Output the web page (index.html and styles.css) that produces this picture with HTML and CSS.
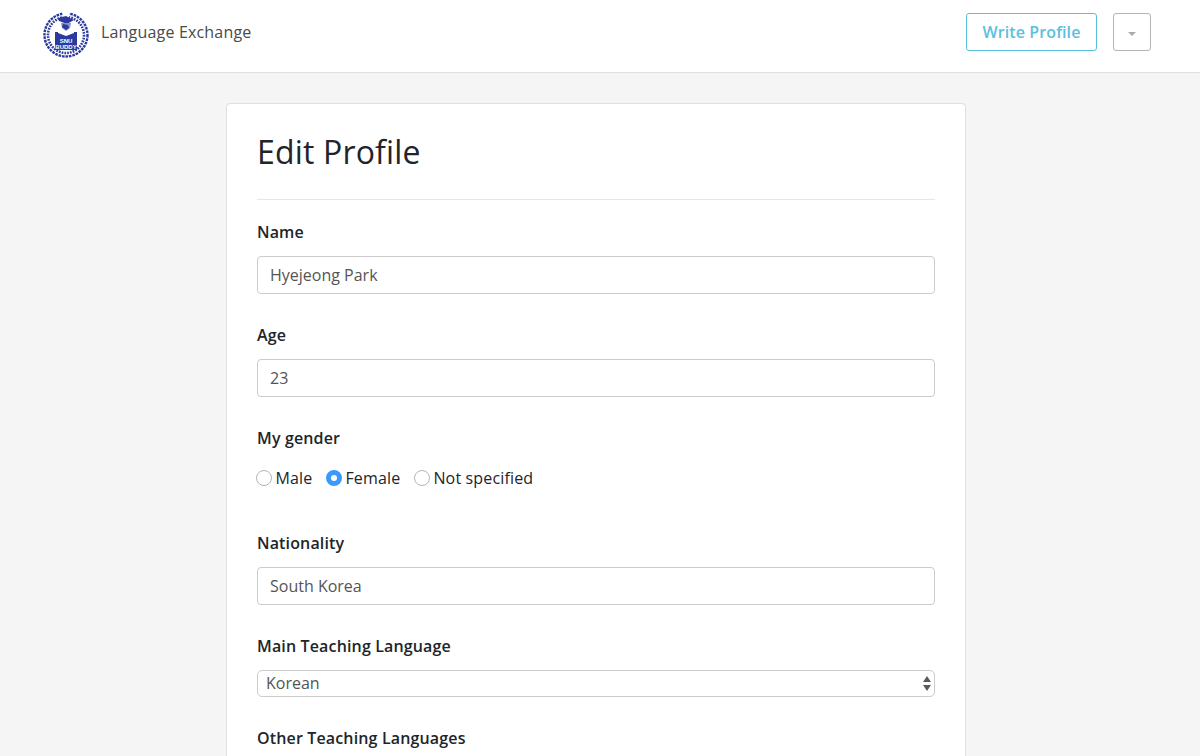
FILE: index.html
```html
<!DOCTYPE html>
<html lang="en">

<head>
    <meta charset="UTF-8">
    <meta name="viewport" content="width=device-width, initial-scale=1.0">
    <title>Edit Profile</title>
    <link rel="stylesheet" href="styles.css">
</head>

<body>
    <header class="topbar">
        <a class="brand" href="#">
            <svg class="brand-logo" viewBox="0 0 46 46" width="46" height="46">
                <g fill="none" stroke="#2b3a9e">
                    <circle cx="23" cy="23" r="21.500" stroke-width="2.400" stroke-dasharray="2.600 .9"/>
                    <circle cx="23" cy="23" r="18" stroke-width="2.600" stroke-dasharray="1.700 1.100"/>
                </g>
                <path d="M19 0h8l-2 8h-4z" fill="#fff"/>
                <path d="M15 6l8-2 8 4-7 4-8-3z" fill="#2b3a9e"/>
                <path d="M18 11h10l-1 5-4 3-4-3z" fill="#8a93cf"/>
                <path d="M20 12l5 1 1 3-3 2-4-3z" fill="#2b3a9e"/>
                <path d="M12 20h4l7 3 7-3h4v18H12z" fill="#2b3a9e"/>
                <path d="M15 18l8 3 8-3v3l-8 3-8-3z" fill="#fff"/>
                <text class="logo-text" x="23" y="30.500" text-anchor="middle">SNU</text>
                <text class="logo-text" x="23" y="36.500" text-anchor="middle">BUDDY</text>
            </svg>
            <span class="brand-name">Language Exchange</span>
        </a>
        <div class="topbar-actions">
            <button class="btn btn-write" type="button">Write Profile</button>
            <button class="btn btn-menu" type="button"><span class="caret"></span></button>
        </div>
    </header>

    <main class="page">
        <section class="card">
            <h1>Edit Profile</h1>
            <hr>
            <form>
                <div class="field">
                    <label for="name">Name</label>
                    <input id="name" type="text" value="Hyejeong Park">
                </div>
                <div class="field">
                    <label for="age">Age</label>
                    <input id="age" type="text" value="23">
                </div>
                <div class="field field-gender">
                    <label>My gender</label>
                    <div class="radios">
                        <label class="radio"><input type="radio" name="gender">Male</label>
                        <label class="radio"><input type="radio" name="gender" checked>Female</label>
                        <label class="radio"><input type="radio" name="gender">Not specified</label>
                    </div>
                </div>
                <div class="field">
                    <label for="nationality">Nationality</label>
                    <input id="nationality" type="text" value="South Korea">
                </div>
                <div class="field">
                    <label for="main-lang">Main Teaching Language</label>
                    <div class="select-wrap">
                        <select id="main-lang">
                            <option>Korean</option>
                            <option>English</option>
                        </select>
                        <svg class="select-arrows" viewBox="0 0 8 15" width="8" height="15">
                            <path d="M4 0l4 6H0z M0 9h8l-4 6z" fill="#555b61"/>
                        </svg>
                    </div>
                </div>
                <div class="field">
                    <label>Other Teaching Languages</label>
                </div>
            </form>
        </section>
    </main>
</body>

</html>
```

FILE: styles.css
```css
* {
    box-sizing: border-box;
    margin: 0;
    padding: 0;
}

html,
body {
    height: 756px;
    overflow: hidden;
}

body {
    background: #f5f5f5;
    color: #212529;
    font-family: "Open Sans", "Noto Sans", sans-serif;
    font-size: 16px;
    line-height: 24px;
}

.topbar {
    display: flex;
    justify-content: space-between;
    align-items: center;
    height: 73px;
    padding: 0 49px 0 43px;
    background: #fff;
    border-bottom: 1px solid #dfdfdf;
}

.brand {
    display: flex;
    align-items: center;
    color: #4a4a4a;
    text-decoration: none;
}

.brand-logo {
    margin-right: 12px;
    margin-bottom: 2px;
}

.brand-name {
    margin-bottom: 8px;
    letter-spacing: .18px;
}

.logo-text {
    fill: #fff;
    font-family: "Liberation Sans", sans-serif;
    font-size: 6px;
    font-weight: 700;
}

.topbar-actions {
    display: flex;
    gap: 16px;
    padding-bottom: 8px;
}

.btn {
    height: 38px;
    background: #fff;
    border-radius: 3px;
    font-family: inherit;
    font-size: 16px;
    font-weight: 600;
    letter-spacing: .1px;
}

.btn-write {
    width: 131px;
    border: 1px solid #5bc0de;
    color: #5bc0de;
}

.btn-menu {
    display: flex;
    justify-content: center;
    align-items: center;
    width: 38px;
    padding-top: 3px;
    border: 1px solid #b4b4b4;
}

.caret {
    width: 0;
    height: 0;
    border-top: 4px solid #aaa;
    border-left: 4px solid transparent;
    border-right: 4px solid transparent;
}

.page {
    width: 740px;
    margin: 30px 0 0 226px;
}

.card {
    height: 800px;
    padding: 29px 30px 30px;
    background: #fff;
    border: 1px solid #dfdfdf;
    border-radius: 4px;
}

h1 {
    font-size: 32px;
    font-weight: 400;
    line-height: 38px;
    letter-spacing: .17px;
}

hr {
    margin: 28px 0 20px;
    border: 0;
    border-top: 1px solid #e6e6e6;
}

.field {
    margin-bottom: 29px;
}

.field > label {
    display: block;
    margin-bottom: 12px;
    font-weight: 600;
    letter-spacing: .15px;
}

.field input[type="text"] {
    display: block;
    width: 100%;
    height: 38px;
    padding: 0 12px;
    background: #fff;
    border: 1px solid #ccc;
    border-radius: 4px;
    color: #555;
    font-family: inherit;
    font-size: 16px;
}

.field-gender {
    margin-bottom: 41px;
}

.field-gender > label {
    margin-bottom: 16px;
}

.radios {
    display: flex;
    gap: 13.500px;
    margin-left: -1px;
    letter-spacing: .16px;
}

.radio {
    display: flex;
    align-items: center;
    gap: 3.500px;
}

.radio input {
    appearance: none;
    width: 16px;
    height: 16px;
    background: #fff;
    border: 1px solid #b5b5b5;
    border-radius: 50%;
}

.radio input:checked {
    background: #fff;
    border: 5px solid #3b99fc;
}

.select-wrap {
    position: relative;
}

.select-wrap select {
    display: block;
    width: 100%;
    height: 27px;
    padding: 0 8px 2px;
    appearance: none;
    background: #fff;
    border: 1px solid #ccc;
    border-radius: 5px;
    color: #555;
    font-family: inherit;
    font-size: 16px;
}

.select-arrows {
    position: absolute;
    top: 6px;
    right: 4px;
}
```
